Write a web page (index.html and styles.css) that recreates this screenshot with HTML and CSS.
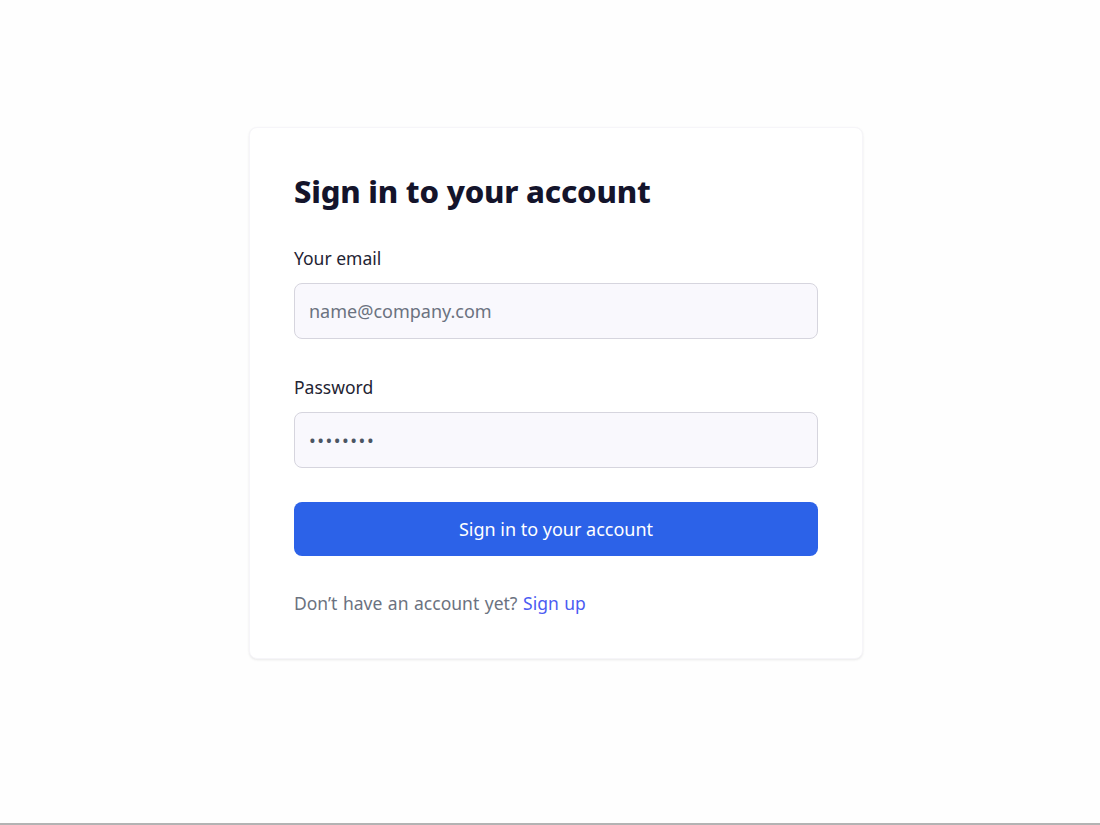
FILE: index.html
```html
<!DOCTYPE html>
<html lang="en">
<head>
<meta charset="utf-8">
<title>Sign in</title>
<link rel="stylesheet" href="styles.css">
</head>
<body>
<main class="page">
  <section class="card">
    <h1 class="title">Sign in to your account</h1>
    <form class="form">
      <label class="label" for="email">Your email</label>
      <input class="input" id="email" type="email" placeholder="name@company.com">
      <label class="label label-gap" for="password">Password</label>
      <input class="input input-pass" id="password" type="password" value="12345678">
      <button class="button" type="button">Sign in to your account</button>
      <p class="footer">Don’t have an account yet? <a class="link" href="#">Sign up</a></p>
    </form>
  </section>
</main>
</body>
</html>
```
FILE: styles.css
```css
* { box-sizing: border-box; }
html, body { margin: 0; padding: 0; }
body {
  background: #fefefe;
  font-family: "Noto Sans", "Open Sans", sans-serif;
  color: #1f2937;
}
.page {
  height: 825px;
  border-bottom: 2px solid #b3b3b3;
  display: flex;
  justify-content: center;
  align-items: flex-start;
  padding-top: 127px;
  padding-left: 12px;
}
.card {
  width: 614px;
  background: #ffffff;
  border-radius: 8px;
  border: 1px solid #f6f5f9;
  box-shadow: 0 1px 3px rgba(0, 0, 0, 0.06), 0 1px 2px rgba(0, 0, 0, 0.03);
  padding: 45px 44px 43px 44px;
}
.title {
  margin: 0;
  font-size: 31px;
  line-height: 36px;
  font-weight: 800;
  color: #14142b;
  letter-spacing: -0.2px;
}
.form {
  display: flex;
  flex-direction: column;
  margin-top: 37px;
}
.label {
  font-size: 17.5px;
  line-height: 24px;
  color: #1f2433;
  margin-bottom: 13px;
}
.label-gap { margin-top: 36px; }
.input {
  width: 524px;
  height: 56px;
  border: 1px solid #d6d5de;
  border-radius: 8px;
  background: #f9f8fd;
  padding: 0 14px;
  font-family: inherit;
  font-size: 18px;
  color: #4b5563;
  outline: none;
}
.input::placeholder { color: #6b7280; }
.input-pass { letter-spacing: 1.5px; }
.button {
  margin-top: 34px;
  width: 524px;
  height: 54px;
  border: none;
  border-radius: 8px;
  background: #2c62e8;
  color: #ffffff;
  font-family: inherit;
  font-size: 18px;
  cursor: pointer;
}
.footer {
  margin: 35px 0 0;
  font-size: 17.5px;
  line-height: 24px;
  color: #6b7280;
  word-spacing: 1px;
}
.link {
  color: #4c5cf2;
  text-decoration: none;
}
```
